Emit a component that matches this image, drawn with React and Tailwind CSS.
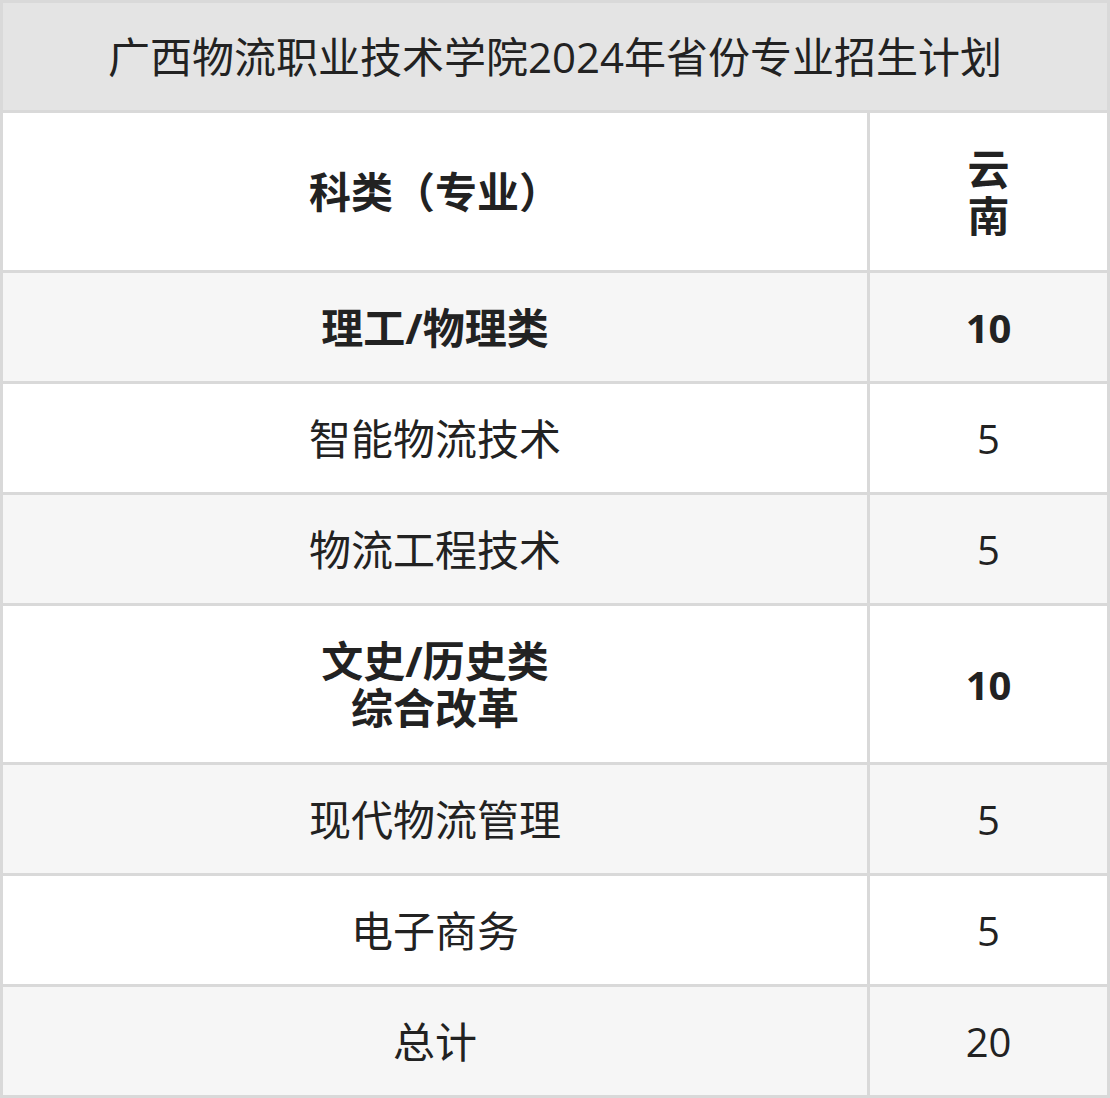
const rows = [
  { name: ['理工/物理类'], value: '10', bold: true },
  { name: ['智能物流技术'], value: '5' },
  { name: ['物流工程技术'], value: '5' },
  { name: ['文史/历史类', '综合改革'], value: '10', bold: true },
  { name: ['现代物流管理'], value: '5' },
  { name: ['电子商务'], value: '5' },
  { name: ['总计'], value: '20' },
];

export default function App() {
  return (
    <div
      className="w-[1110px] bg-white text-[#222222] text-[42px] leading-[47px]"
      style={{ fontFamily: '"Open Sans", "Noto Sans CJK SC", sans-serif' }}
    >
      <div className="grid grid-cols-[864px_237px] gap-[3px] bg-[#d9d9d9] p-[3px]">
        <div className="col-span-2 flex h-[107px] items-center justify-center bg-[#e4e4e4]">
          广西物流职业技术学院2024年省份专业招生计划
        </div>

        <div className="flex h-[157px] items-center justify-center bg-white font-bold">科类（专业）</div>
        <div className="flex h-[157px] flex-col items-center justify-center bg-white font-bold">
          <span>云</span>
          <span>南</span>
        </div>

        {rows.map((row, i) => {
          const bg = i % 2 === 0 ? 'bg-[#f6f6f6]' : 'bg-white';
          const h = row.name.length > 1 ? 'h-[156px]' : 'h-[108px]';
          return (
            <div key={i} className="contents">
              <div className={`flex flex-col items-center justify-center ${h} ${bg} ${row.bold ? 'font-bold' : ''}`}>
                {row.name.map((line) => (
                  <span key={line}>{line}</span>
                ))}
              </div>
              <div className={`flex items-center justify-center text-[40px] ${h} ${bg} ${row.bold ? 'font-bold' : ''}`}>
                {row.value}
              </div>
            </div>
          );
        })}
      </div>
    </div>
  );
}
